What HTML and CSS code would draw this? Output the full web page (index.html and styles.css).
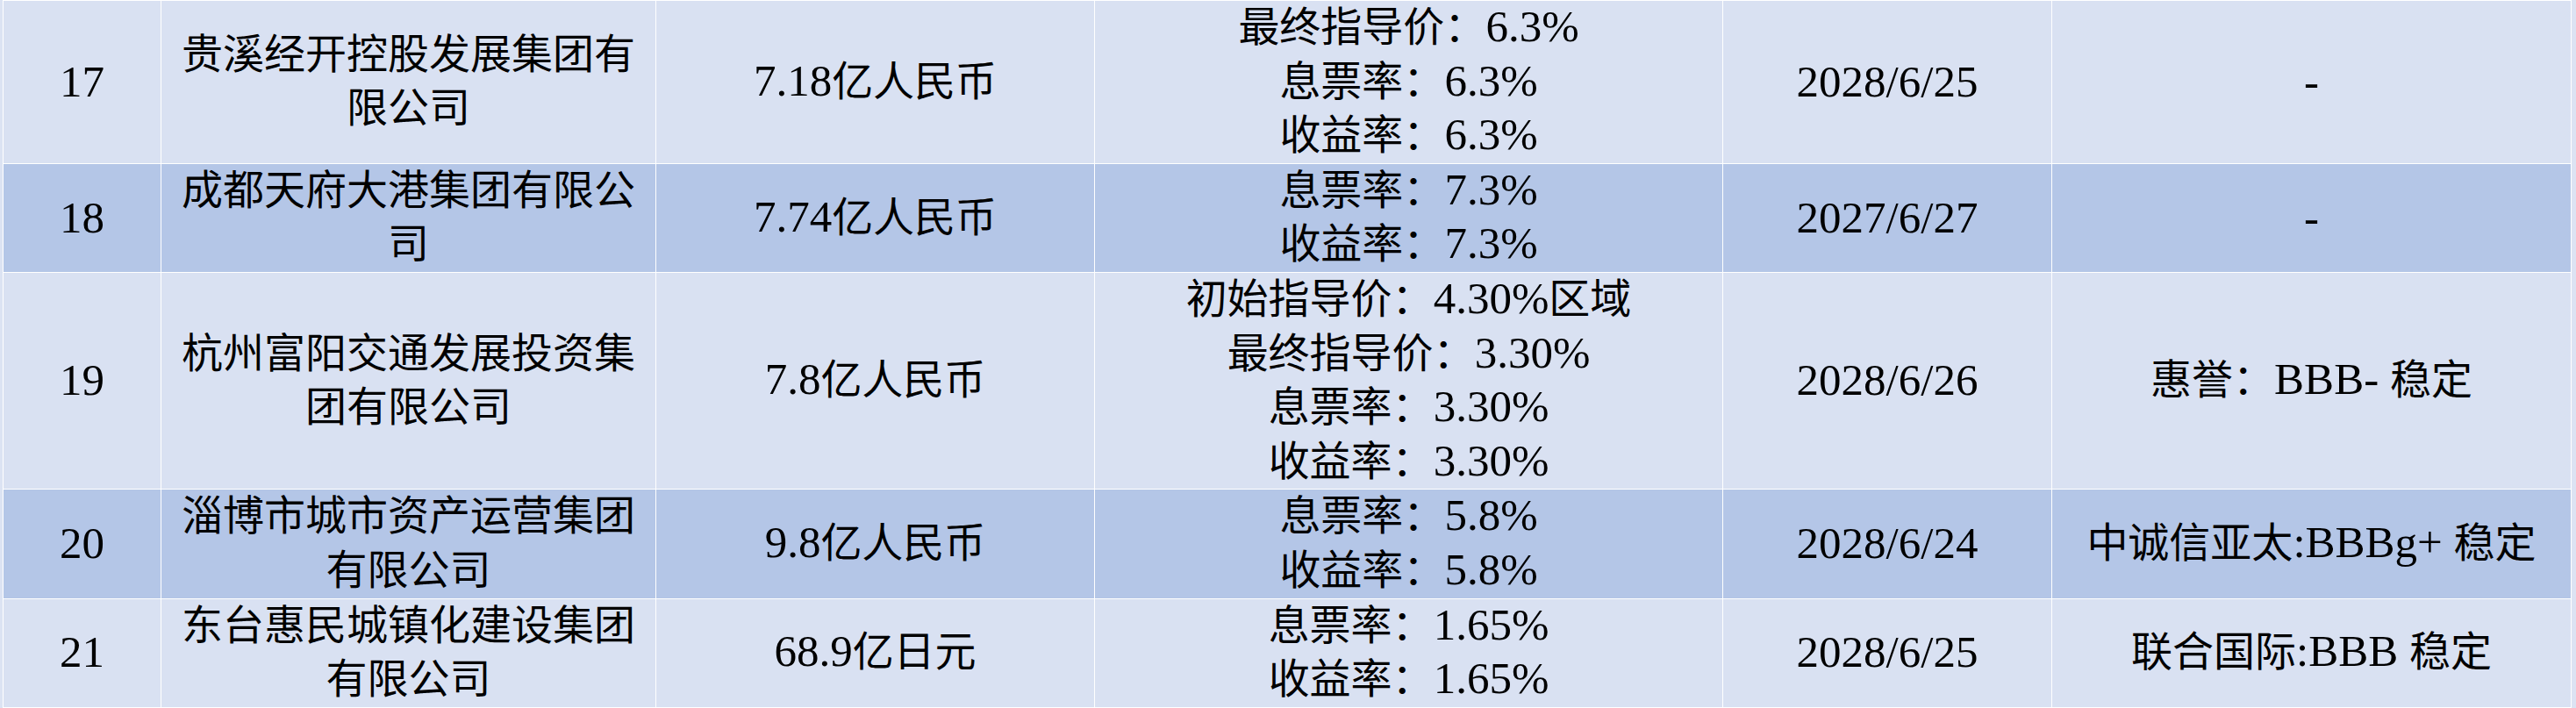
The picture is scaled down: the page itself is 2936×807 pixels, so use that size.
FILE: index.html
```html
<!DOCTYPE html>
<html lang="zh-CN">
<head>
<meta charset="utf-8">
<title>债券发行</title>
<link rel="stylesheet" href="styles.css">
</head>
<body>
<table class="bonds">
  <colgroup>
    <col class="c-no"><col class="c-name"><col class="c-amt"><col class="c-rate"><col class="c-date"><col class="c-rating">
  </colgroup>
  <tbody>
    <tr class="light">
      <td class="en">17</td>
      <td class="name">贵溪经开控股发展集团有限公司</td>
      <td><span class="en">7.18</span>亿人民币</td>
      <td>最终指导价：<span class="en">6.3%</span><br>息票率：<span class="en">6.3%</span><br>收益率：<span class="en">6.3%</span></td>
      <td class="en">2028/6/25</td>
      <td class="en">-</td>
    </tr>
    <tr class="dark">
      <td class="en">18</td>
      <td class="name">成都天府大港集团有限公司</td>
      <td><span class="en">7.74</span>亿人民币</td>
      <td>息票率：<span class="en">7.3%</span><br>收益率：<span class="en">7.3%</span></td>
      <td class="en">2027/6/27</td>
      <td class="en">-</td>
    </tr>
    <tr class="light">
      <td class="en">19</td>
      <td class="name">杭州富阳交通发展投资集团有限公司</td>
      <td><span class="en">7.8</span>亿人民币</td>
      <td>初始指导价：<span class="en">4.30%</span>区域<br>最终指导价：<span class="en">3.30%</span><br>息票率：<span class="en">3.30%</span><br>收益率：<span class="en">3.30%</span></td>
      <td class="en">2028/6/26</td>
      <td>惠誉：<span class="en">BBB- </span>稳定</td>
    </tr>
    <tr class="dark">
      <td class="en">20</td>
      <td class="name">淄博市城市资产运营集团有限公司</td>
      <td><span class="en">9.8</span>亿人民币</td>
      <td>息票率：<span class="en">5.8%</span><br>收益率：<span class="en">5.8%</span></td>
      <td class="en">2028/6/24</td>
      <td>中诚信亚太<span class="en">:BBBg+ </span>稳定</td>
    </tr>
    <tr class="light">
      <td class="en">21</td>
      <td class="name">东台惠民城镇化建设集团有限公司</td>
      <td><span class="en">68.9</span>亿日元</td>
      <td>息票率：<span class="en">1.65%</span><br>收益率：<span class="en">1.65%</span></td>
      <td class="en">2028/6/25</td>
      <td>联合国际<span class="en">:BBB </span>稳定</td>
    </tr>
  </tbody>
</table>
</body>
</html>
```

FILE: styles.css
```css
html, body {
  margin: 0;
  padding: 0;
  background: #dce3f3;
}

.bonds {
  margin-left: 3px;
  width: 2927px;
  table-layout: fixed;
  border-collapse: collapse;
  font-family: "Liberation Serif", "Noto Sans CJK SC", serif;
  font-size: 47px;
  line-height: 61.6px;
  color: #000;
}

.c-no { width: 180px; }
.c-name { width: 564px; }
.c-amt { width: 500px; }
.c-rate { width: 716px; }
.c-date { width: 375px; }
.c-rating { width: 592px; }

.bonds td {
  border: 1px solid #ffffff;
  padding: 0;
  text-align: center;
  vertical-align: middle;
  white-space: normal;
}

.bonds td.name {
  padding: 0 12px;
}

.light td { background: #d9e1f2; }
.dark td { background: #b4c6e7; }

.en {
  font-family: "Liberation Serif", serif;
  font-size: 51px;
}

span.en {
  line-height: 1;
}
```
